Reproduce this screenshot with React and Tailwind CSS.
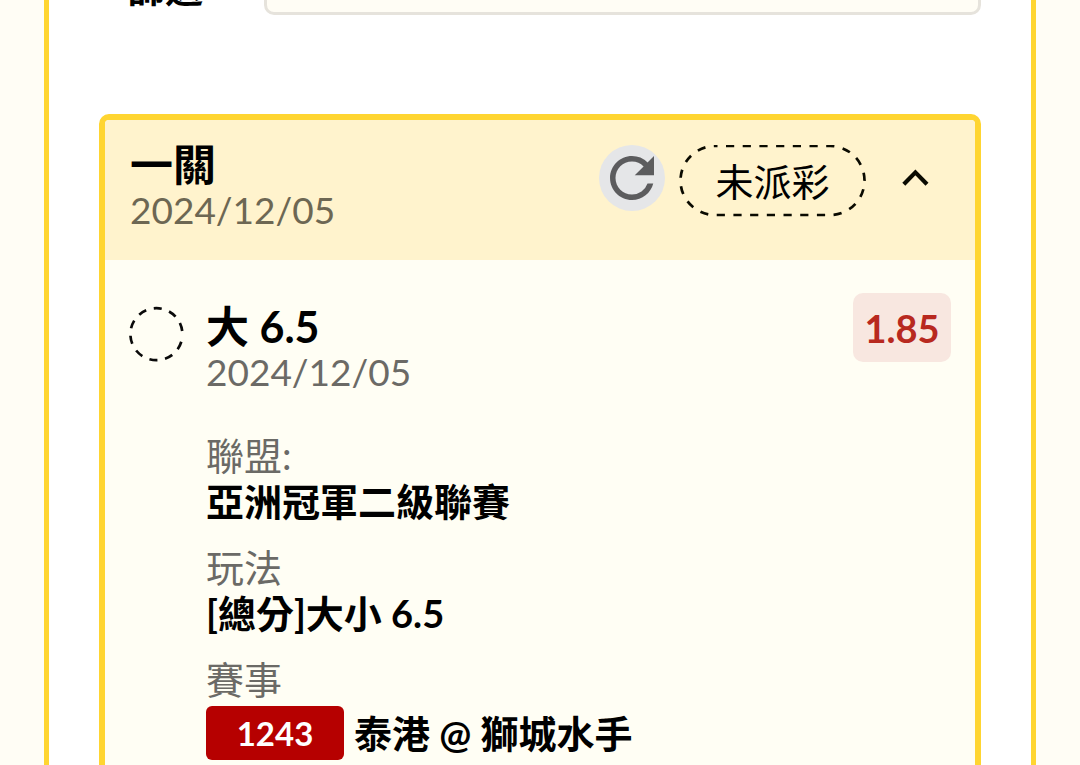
import { useState } from "react";
import { MdRefresh } from "react-icons/md";

const details = [
  { label: "聯盟:", value: "亞洲冠軍二級聯賽" },
  { label: "玩法", value: "[總分]大小 6.5" },
];

function StatusPill({ children }) {
  return (
    <div className="relative flex h-[72px] w-[187px] items-center justify-center text-[38px]">
      <svg className="absolute inset-0 size-full" viewBox="0 0 187 72" fill="none" aria-hidden="true">
        <rect
          x="1.5"
          y="1"
          width="184"
          height="69"
          rx="34.5"
          stroke="#0a0a00"
          strokeWidth="2.7"
          strokeDasharray="8.2 8.5"
          strokeDashoffset="5.7"
        />
      </svg>
      <span>{children}</span>
    </div>
  );
}

function PendingRing() {
  return (
    <svg className="size-14 shrink-0" viewBox="0 0 56 56" fill="none" aria-hidden="true">
      <circle
        cx="28.4"
        cy="28.2"
        r="26"
        stroke="#0a0a0a"
        strokeWidth="2.7"
        strokeDasharray="8.2 7.7"
        strokeDashoffset="-7.7"
      />
    </svg>
  );
}

function Chevron({ open }) {
  return (
    <svg
      className={open ? "h-[18px] w-7" : "h-[18px] w-7 rotate-180"}
      viewBox="0 0 28 18"
      fill="none"
      stroke="#0a0a00"
      strokeWidth="4.2"
      aria-hidden="true"
    >
      <path d="M2.8 15.2 14.4 3.4 26 15.2" />
    </svg>
  );
}

function BetDetails() {
  return (
    <div className="flex items-start pt-[33px] pr-6 pb-10 pl-[23px]">
      <div className="pt-[13px]">
        <PendingRing />
      </div>
      <div className="min-w-0 flex-1 pt-[14px] pl-[22px]">
        <h3 className="text-[43px] leading-[40px] font-bold">大 6.5</h3>
        <p className="text-[37px] leading-[50px] text-[#6b6a66]">2024/12/05</p>
        <dl className="flex flex-col gap-5 pt-[35px] text-[38px] leading-[46px]">
          {details.map((item) => (
            <div key={item.label}>
              <dt className="text-[#6b6a66]">{item.label}</dt>
              <dd className="font-bold">{item.value}</dd>
            </div>
          ))}
          <div>
            <dt className="text-[#6b6a66]">賽事</dt>
            <dd className="flex items-center gap-2.5 pt-1 font-bold">
              <span className="flex h-[54px] w-[138px] items-center justify-center rounded-md bg-[#b60000] text-[33px] text-white">
                1243
              </span>
              <span>泰港 @ 獅城水手</span>
            </dd>
          </div>
        </dl>
      </div>
      <div className="flex h-[69px] w-[98px] items-center justify-center rounded-[10px] bg-[#f8e7e0] pt-0.5 text-[38px] font-bold text-[#b8291f]">
        1.85
      </div>
    </div>
  );
}

export default function App() {
  const [open, setOpen] = useState(true);

  return (
    <div className="h-screen overflow-hidden bg-[#fffdf5] px-11 font-['Lato','Noto_Sans_CJK_TC',sans-serif] text-black">
      <main className="min-h-full border-x-[5px] border-[#ffd531] bg-white px-[50px]">
        <div className="-mt-[37px] flex items-center">
          <label htmlFor="filter" className="w-[165px] pb-1 pl-7 text-[38px] leading-[46px] font-bold">
            篩選
          </label>
          <input
            id="filter"
            type="text"
            className="h-[52px] min-w-0 flex-1 rounded-[10px] border-[3px] border-[#e6e3dc] bg-[#fffdf5] px-4 text-[38px] outline-none"
          />
        </div>

        <section className="mt-[99px] rounded-[10px] border-[6px] border-[#ffd531] bg-[#fffef4]">
          <header className="flex items-start gap-[14px] rounded-t-[4px] bg-[#fff3cd] p-[25px]">
            <div className="min-w-0 flex-1">
              <h2 className="text-[43px] leading-[40px] font-bold">一關</h2>
              <p className="text-[37px] leading-[50px] text-[#6d6753]">2024/12/05</p>
            </div>
            <button
              type="button"
              aria-label="Refresh"
              className="flex size-[66px] items-center justify-center rounded-full bg-[#e5e6e8] text-[#5c5c5e]"
            >
              <MdRefresh size={66} />
            </button>
            <StatusPill>未派彩</StatusPill>
            <button
              type="button"
              aria-label="Toggle details"
              aria-expanded={open}
              onClick={() => setOpen(!open)}
              className="flex h-[66px] w-[70px] items-center justify-center"
            >
              <Chevron open={open} />
            </button>
          </header>
          {open && <BetDetails />}
        </section>
      </main>
    </div>
  );
}
